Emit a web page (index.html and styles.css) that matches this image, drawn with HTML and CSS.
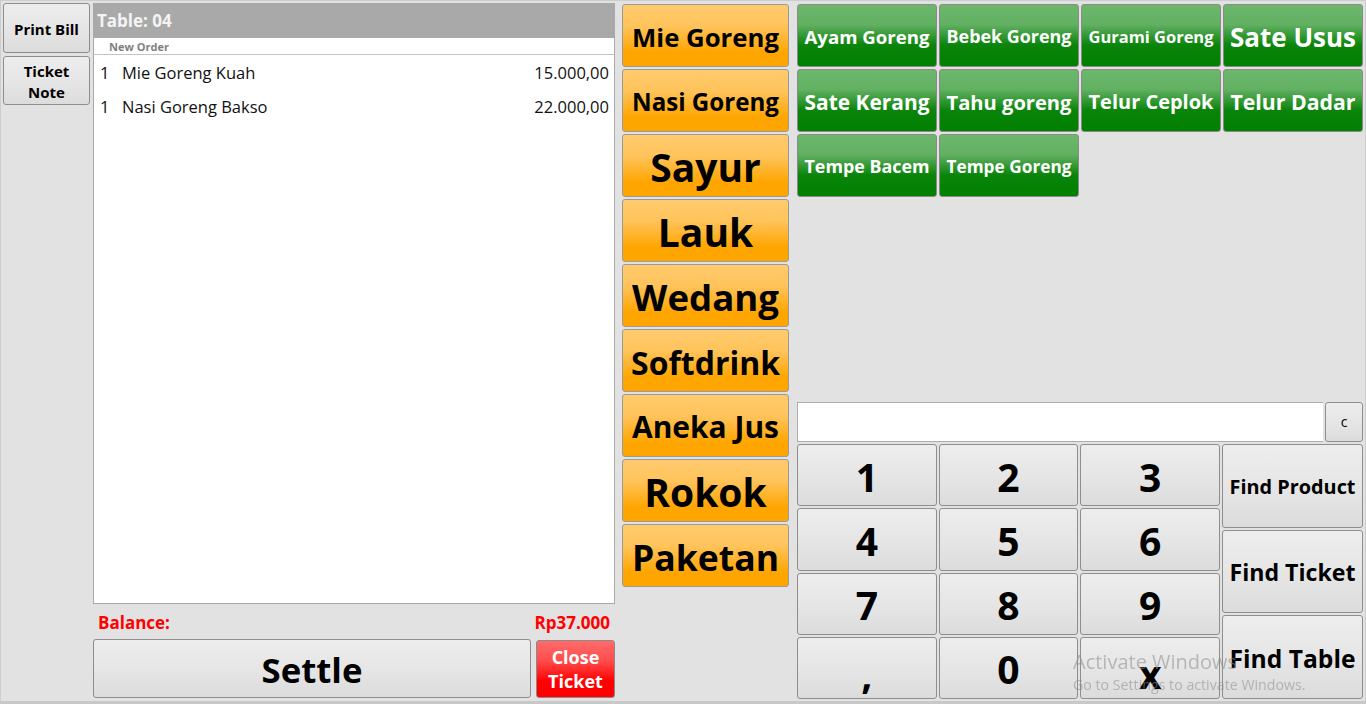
FILE: index.html
```html
<!DOCTYPE html>
<html>
<head>
<meta charset="utf-8">
<title>POS</title>
<link rel="stylesheet" href="styles.css">
</head>
<body>
<div class="app">
  <div class="side">
    <button class="btn gray side-btn print">Print Bill</button>
    <button class="btn gray side-btn note">Ticket<br>Note</button>
  </div>

  <div class="order">
    <div class="ticket">
      <div class="ticket-head">Table: 04</div>
      <div class="ticket-sub">New Order</div>
      <div class="lines">
        <div class="line"><span class="qty">1</span><span class="name">Mie Goreng Kuah</span><span class="price">15.000,00</span></div>
        <div class="line"><span class="qty">1</span><span class="name">Nasi Goreng Bakso</span><span class="price">22.000,00</span></div>
      </div>
    </div>
    <div class="balance"><span>Balance:</span><span>Rp37.000</span></div>
    <div class="actions">
      <button class="btn gray settle"><span class="fit" data-fit="101" data-max="37">Settle</span></button>
      <button class="btn red close">Close<br>Ticket</button>
    </div>
  </div>

  <div class="cats">
    <button class="btn orange cat"><span class="fit" data-fit="147" data-max="39">Mie Goreng</span></button>
    <button class="btn orange cat"><span class="fit" data-fit="147" data-max="39">Nasi Goreng</span></button>
    <button class="btn orange cat"><span class="fit" data-fit="147" data-max="39">Sayur</span></button>
    <button class="btn orange cat"><span class="fit" data-fit="147" data-max="39">Lauk</span></button>
    <button class="btn orange cat"><span class="fit" data-fit="147" data-max="39">Wedang</span></button>
    <button class="btn orange cat"><span class="fit" data-fit="149" data-max="39">Softdrink</span></button>
    <button class="btn orange cat"><span class="fit" data-fit="147" data-max="39">Aneka Jus</span></button>
    <button class="btn orange cat"><span class="fit" data-fit="147" data-max="39">Rokok</span></button>
    <button class="btn orange cat"><span class="fit" data-fit="147" data-max="39">Paketan</span></button>
  </div>

  <div class="right">
    <div class="products">
      <button class="btn green prod"><span class="fit" data-fit="125" data-max="40">Ayam Goreng</span></button>
      <button class="btn green prod"><span class="fit" data-fit="125" data-max="40">Bebek Goreng</span></button>
      <button class="btn green prod"><span class="fit" data-fit="125" data-max="40">Gurami Goreng</span></button>
      <button class="btn green prod"><span class="fit" data-fit="126" data-max="40">Sate Usus</span></button>
      <button class="btn green prod"><span class="fit" data-fit="125" data-max="40">Sate Kerang</span></button>
      <button class="btn green prod"><span class="fit" data-fit="125" data-max="40">Tahu goreng</span></button>
      <button class="btn green prod"><span class="fit" data-fit="125" data-max="40">Telur Ceplok</span></button>
      <button class="btn green prod"><span class="fit" data-fit="125" data-max="40">Telur Dadar</span></button>
      <button class="btn green prod"><span class="fit" data-fit="125" data-max="40">Tempe Bacem</span></button>
      <button class="btn green prod"><span class="fit" data-fit="125" data-max="40">Tempe Goreng</span></button>
    </div>

    <div class="entry">
      <div class="input"></div>
      <button class="btn gray clear">c</button>
    </div>

    <div class="pad">
      <div class="keys">
        <button class="btn gray key">1</button>
        <button class="btn gray key">2</button>
        <button class="btn gray key">3</button>
        <button class="btn gray key">4</button>
        <button class="btn gray key">5</button>
        <button class="btn gray key">6</button>
        <button class="btn gray key">7</button>
        <button class="btn gray key">8</button>
        <button class="btn gray key">9</button>
        <button class="btn gray key comma">,</button>
        <button class="btn gray key">0</button>
        <button class="btn gray key x">x</button>
      </div>
      <div class="finds">
        <button class="btn gray find"><span class="fit" data-fit="126" data-max="30">Find Product</span></button>
        <button class="btn gray find"><span class="fit" data-fit="126" data-max="30">Find Ticket</span></button>
        <button class="btn gray find"><span class="fit" data-fit="126" data-max="30">Find Table</span></button>
      </div>
    </div>
  </div>
</div>

<div class="watermark">
  <div class="wm-title">Activate Windows</div>
  <div class="wm-sub">Go to Settings to activate Windows.</div>
</div>

<script src="fit.js"></script>
</body>
</html>
```

FILE: styles.css
```css
* { box-sizing: border-box; }

html, body {
  margin: 0;
  padding: 0;
  background: #e2e2e2;
}

body {
  font-family: "Open Sans", "Noto Sans", "Liberation Sans", sans-serif;
  width: 1366px;
  height: 704px;
  overflow: hidden;
}

.app {
  width: 1366px;
  height: 704px;
  border: 1px solid #cdcdcd;
  border-bottom: 3px solid #c8c8c8;
  padding: 2px 2px 2px 2px;
  display: grid;
  grid-template-columns: 87px 525px 174px 1fr;
  background: #e2e2e2;
}

/* buttons */
.btn {
  margin: 0;
  padding: 0;
  border: 1px solid #8e8e8e;
  border-radius: 3px;
  font-family: inherit;
  font-weight: 700;
  color: #000;
  display: flex;
  align-items: center;
  justify-content: center;
  text-align: center;
  line-height: 1.1;
  cursor: pointer;
  overflow: hidden;
  white-space: nowrap;
}

.gray {
  background: linear-gradient(to bottom, #ededed 0%, #e6e6e6 50%, #dcdcdc 100%);
}

.orange {
  background: linear-gradient(to bottom, #ffcb6e 0%, #ffc35a 35%, #ffa500 78%, #ffa500 100%);
  border-color: #9a9a9a;
}

.green {
  background: linear-gradient(to bottom, #6cb76c 0%, #62b062 32%, #0a840a 66%, #008000 100%);
  color: #fff;
  border-color: #8a8a8a;
}

.red {
  background: linear-gradient(to bottom, #ff6b6b 0%, #ff4d4d 35%, #ff0000 72%, #ff0000 100%);
  color: #fff;
  border-color: #8a8a8a;
}

.fit {
  display: inline-block;
  white-space: nowrap;
}

/* side column */
.side {
  display: flex;
  flex-direction: column;
  gap: 3px;
}

.side-btn {
  width: 87px;
  font-size: 15px;
  line-height: 21px;
  padding-top: 2px;
}

.print { height: 50px; }
.note { height: 49px; }

/* order column */
.order {
  padding-left: 3px;
  display: flex;
  flex-direction: column;
}

.ticket {
  flex: 1;
  background: #fff;
  border: 1px solid #a9a9a9;
  border-top: 0;
  display: flex;
  flex-direction: column;
}

.ticket-head {
  height: 35px;
  background: #a9a9a9;
  color: #f4f4f4;
  font-weight: 700;
  font-size: 17px;
  padding-left: 4px;
  display: flex;
  align-items: center;
  margin: 0 -1px;
}

.ticket-sub {
  height: 17px;
  border-bottom: 1px solid #c4c4c4;
  font-size: 11px;
  font-weight: 700;
  color: #7f7f7f;
  padding-left: 15px;
  display: flex;
  align-items: center;
}

.lines {
  display: flex;
  flex-direction: column;
}

.line {
  height: 34px;
  display: flex;
  align-items: center;
  padding: 0 5px 0 6px;
  font-size: 16.5px;
  color: #111;
}

.qty { width: 22px; }
.name { flex: 1; }
.price { text-align: right; }

.balance {
  height: 35px;
  display: flex;
  justify-content: space-between;
  align-items: center;
  padding: 2px 5px 0 5px;
  color: #ff0000;
  font-weight: 700;
  font-size: 17px;
}

.actions {
  height: 60px;
  display: flex;
  gap: 5px;
  padding-bottom: 1px;
}

.settle {
  width: 438px;
  height: 59px;
  padding-top: 3px;
}

.close {
  flex: 1;
  height: 58px;
  margin-top: 1px;
  font-size: 18px;
  line-height: 24px;
}

/* categories */
.cats {
  padding: 1px 0 0 7px;
  display: flex;
  flex-direction: column;
  gap: 2px;
}

.cat {
  width: 167px;
  height: 63px;
  padding-top: 4px;
}

/* right side */
.right {
  padding: 1px 0 0 8px;
  display: flex;
  flex-direction: column;
}

.products {
  display: grid;
  grid-template-columns: repeat(4, 1fr);
  grid-auto-rows: 63px;
  gap: 2px;
}

.prod {
  padding-top: 3px;
}

.entry {
  margin-top: auto;
  display: flex;
  gap: 2px;
  height: 40px;
}

.input {
  flex: 1;
  background: #fff;
  border: 1px solid #adadad;
  border-right: 0;
}

.clear {
  width: 38px;
  font-size: 14px;
  font-weight: 400;
}

.pad {
  margin-top: 2px;
  height: 255px;
  display: flex;
  gap: 2px;
}

.keys {
  width: 423px;
  display: grid;
  grid-template-columns: repeat(3, 1fr);
  grid-template-rows: repeat(4, 1fr);
  gap: 2px;
}

.key {
  font-size: 39px;
  line-height: 1;
  padding-top: 2px;
}

.comma, .x {
  padding-top: 12px;
}

.finds {
  flex: 1;
  display: grid;
  grid-template-rows: repeat(3, 1fr);
  gap: 2px;
}

.find {
  padding-top: 2px;
}

/* watermark */
.watermark {
  position: fixed;
  left: 1073px;
  top: 650px;
  color: rgba(140, 140, 140, 0.55);
  font-family: "Open Sans", "Noto Sans", sans-serif;
  pointer-events: none;
}

.wm-title {
  font-size: 20px;
  line-height: 24px;
}

.wm-sub {
  font-size: 14.2px;
  line-height: 18px;
  margin-top: 2px;
}
```

FILE: fit.js
```js
document.querySelectorAll('.fit').forEach(function (el) {
  var target = parseFloat(el.dataset.fit);
  var max = parseFloat(el.dataset.max);
  el.style.fontSize = max + 'px';
  var w = el.getBoundingClientRect().width;
  if (w > target) {
    el.style.fontSize = (max * target / w) + 'px';
  }
});
```
